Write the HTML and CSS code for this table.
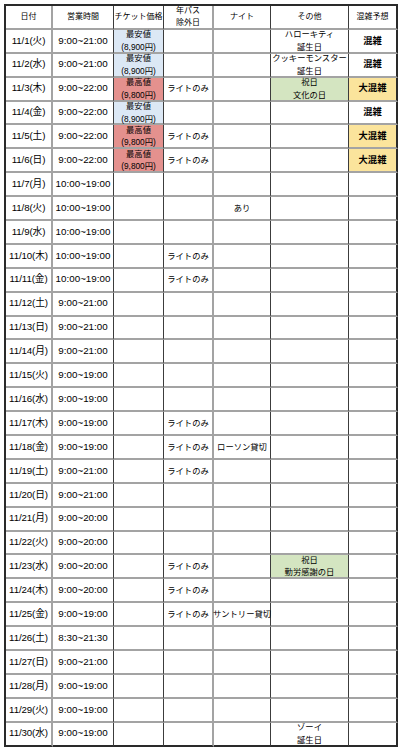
FILE: index.html
```html
<!DOCTYPE html>
<html lang="ja">
<head>
<meta charset="utf-8">
<title>11月 営業カレンダー</title>
<link rel="stylesheet" href="styles.css">
</head>
<body>
<div class="sheet">
  <div class="c h">日付</div><div class="c h">営業時間</div><div class="c h">チケット価格</div><div class="c h">年パス<br>除外日</div><div class="c h">ナイト</div><div class="c h">その他</div><div class="c h">混雑予想</div>

  <div class="c d">11/1(火)</div><div class="c t">9:00~21:00</div><div class="c p low">最安値<br>(8,900円)</div><div class="c s"></div><div class="c s"></div><div class="c s">ハローキティ<br>誕生日</div><div class="c k">混雑</div>
  <div class="c d">11/2(水)</div><div class="c t">9:00~21:00</div><div class="c p low">最安値<br>(8,900円)</div><div class="c s"></div><div class="c s"></div><div class="c s">クッキーモンスター<br>誕生日</div><div class="c k">混雑</div>
  <div class="c d">11/3(木)</div><div class="c t">9:00~22:00</div><div class="c p high">最高値<br>(9,800円)</div><div class="c s">ライトのみ</div><div class="c s"></div><div class="c s hol">祝日<br>文化の日</div><div class="c k busy">大混雑</div>
  <div class="c d">11/4(金)</div><div class="c t">9:00~22:00</div><div class="c p low">最安値<br>(8,900円)</div><div class="c s"></div><div class="c s"></div><div class="c s"></div><div class="c k">混雑</div>
  <div class="c d">11/5(土)</div><div class="c t">9:00~22:00</div><div class="c p high">最高値<br>(9,800円)</div><div class="c s">ライトのみ</div><div class="c s"></div><div class="c s"></div><div class="c k busy">大混雑</div>
  <div class="c d">11/6(日)</div><div class="c t">9:00~22:00</div><div class="c p high">最高値<br>(9,800円)</div><div class="c s">ライトのみ</div><div class="c s"></div><div class="c s"></div><div class="c k busy">大混雑</div>
  <div class="c d">11/7(月)</div><div class="c t">10:00~19:00</div><div class="c p"></div><div class="c s"></div><div class="c s"></div><div class="c s"></div><div class="c k"></div>
  <div class="c d">11/8(火)</div><div class="c t">10:00~19:00</div><div class="c p"></div><div class="c s"></div><div class="c s">あり</div><div class="c s"></div><div class="c k"></div>
  <div class="c d">11/9(水)</div><div class="c t">10:00~19:00</div><div class="c p"></div><div class="c s"></div><div class="c s"></div><div class="c s"></div><div class="c k"></div>
  <div class="c d">11/10(木)</div><div class="c t">10:00~19:00</div><div class="c p"></div><div class="c s">ライトのみ</div><div class="c s"></div><div class="c s"></div><div class="c k"></div>
  <div class="c d">11/11(金)</div><div class="c t">10:00~19:00</div><div class="c p"></div><div class="c s">ライトのみ</div><div class="c s"></div><div class="c s"></div><div class="c k"></div>
  <div class="c d">11/12(土)</div><div class="c t">9:00~21:00</div><div class="c p"></div><div class="c s"></div><div class="c s"></div><div class="c s"></div><div class="c k"></div>
  <div class="c d">11/13(日)</div><div class="c t">9:00~21:00</div><div class="c p"></div><div class="c s"></div><div class="c s"></div><div class="c s"></div><div class="c k"></div>
  <div class="c d">11/14(月)</div><div class="c t">9:00~21:00</div><div class="c p"></div><div class="c s"></div><div class="c s"></div><div class="c s"></div><div class="c k"></div>
  <div class="c d">11/15(火)</div><div class="c t">9:00~19:00</div><div class="c p"></div><div class="c s"></div><div class="c s"></div><div class="c s"></div><div class="c k"></div>
  <div class="c d">11/16(水)</div><div class="c t">9:00~19:00</div><div class="c p"></div><div class="c s"></div><div class="c s"></div><div class="c s"></div><div class="c k"></div>
  <div class="c d">11/17(木)</div><div class="c t">9:00~19:00</div><div class="c p"></div><div class="c s">ライトのみ</div><div class="c s"></div><div class="c s"></div><div class="c k"></div>
  <div class="c d">11/18(金)</div><div class="c t">9:00~19:00</div><div class="c p"></div><div class="c s">ライトのみ</div><div class="c s">ローソン貸切</div><div class="c s"></div><div class="c k"></div>
  <div class="c d">11/19(土)</div><div class="c t">9:00~21:00</div><div class="c p"></div><div class="c s">ライトのみ</div><div class="c s"></div><div class="c s"></div><div class="c k"></div>
  <div class="c d">11/20(日)</div><div class="c t">9:00~21:00</div><div class="c p"></div><div class="c s"></div><div class="c s"></div><div class="c s"></div><div class="c k"></div>
  <div class="c d">11/21(月)</div><div class="c t">9:00~20:00</div><div class="c p"></div><div class="c s"></div><div class="c s"></div><div class="c s"></div><div class="c k"></div>
  <div class="c d">11/22(火)</div><div class="c t">9:00~20:00</div><div class="c p"></div><div class="c s"></div><div class="c s"></div><div class="c s"></div><div class="c k"></div>
  <div class="c d">11/23(水)</div><div class="c t">9:00~20:00</div><div class="c p"></div><div class="c s">ライトのみ</div><div class="c s"></div><div class="c s hol">祝日<br>勤労感謝の日</div><div class="c k"></div>
  <div class="c d">11/24(木)</div><div class="c t">9:00~20:00</div><div class="c p"></div><div class="c s">ライトのみ</div><div class="c s"></div><div class="c s"></div><div class="c k"></div>
  <div class="c d">11/25(金)</div><div class="c t">9:00~19:00</div><div class="c p"></div><div class="c s">ライトのみ</div><div class="c s">サントリー貸切</div><div class="c s"></div><div class="c k"></div>
  <div class="c d">11/26(土)</div><div class="c t">8:30~21:30</div><div class="c p"></div><div class="c s"></div><div class="c s"></div><div class="c s"></div><div class="c k"></div>
  <div class="c d">11/27(日)</div><div class="c t">9:00~21:00</div><div class="c p"></div><div class="c s"></div><div class="c s"></div><div class="c s"></div><div class="c k"></div>
  <div class="c d">11/28(月)</div><div class="c t">9:00~19:00</div><div class="c p"></div><div class="c s"></div><div class="c s"></div><div class="c s"></div><div class="c k"></div>
  <div class="c d">11/29(火)</div><div class="c t">9:00~19:00</div><div class="c p"></div><div class="c s"></div><div class="c s"></div><div class="c s"></div><div class="c k"></div>
  <div class="c d last">11/30(水)</div><div class="c t last">9:00~19:00</div><div class="c p last"></div><div class="c s last"></div><div class="c s last"></div><div class="c s last">ゾーイ<br>誕生日</div><div class="c k last"></div>
</div>
</body>
</html>
```

FILE: styles.css
```css
html, body {
  margin: 0;
  padding: 0;
  background: #ffffff;
}

body {
  font-family: "Liberation Sans", "Noto Sans CJK JP", sans-serif;
  color: #000;
}

.sheet {
  margin: 4px 0 0 4px;
  width: 392px;
  display: grid;
  grid-template-columns: 47px 61px 50px 50px 57px 78px 49px;
  grid-auto-rows: 23.9px;
  border-top: 2px solid #2a2a2a;
  border-left: 2px solid #2a2a2a;
  box-sizing: content-box;
}

.c {
  box-sizing: border-box;
  border-bottom: 2px solid #a3a3a3;
  border-right: 1px solid #3c3c3c;
  display: flex;
  align-items: center;
  justify-content: center;
  text-align: center;
  white-space: nowrap;
  font-size: 8.3px;
  line-height: 12.5px;
}

.c:nth-child(7n+1),
.c:nth-child(7n+4) {
  border-right: 2px solid #a3a3a3;
}

.c:nth-child(7n) {
  border-right: 2px solid #2a2a2a;
}

.c.last {
  border-bottom: 2px solid #2a2a2a;
}

.h {
  font-size: 8px;
  line-height: 11.5px;
}

.d {
  font-size: 9.7px;
  letter-spacing: -0.1px;
}

.t {
  font-size: 9.8px;
}

.k {
  font-size: 9.3px;
  font-weight: bold;
}

.low {
  background: #dce8f5;
}

.high {
  background: #e4918e;
}

.hol {
  background: #d4e5c1;
}

.busy {
  background: #fbe49c;
}
```
